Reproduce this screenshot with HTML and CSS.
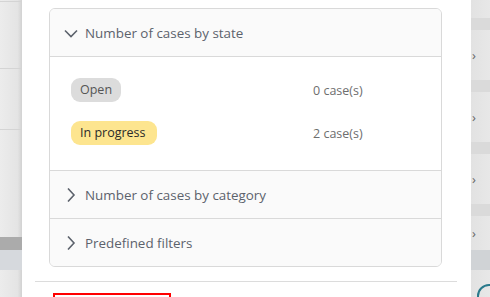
FILE: index.html
```html
<!DOCTYPE html>
<html lang="en">

<head>
  <meta charset="UTF-8" />
  <title>Cases</title>
  <link rel="stylesheet" href="styles.css">
</head>

<body>
  <!-- page behind the dialog, left edge -->
  <div class="backdrop-left">
    <div class="bl-row bl-row-top"></div>
    <div class="bl-row bl-row-a"></div>
    <div class="bl-row bl-row-b"></div>
    <div class="bl-gap"></div>
    <div class="bl-dark"></div>
    <div class="bl-blue"></div>
  </div>

  <div class="dialog">
    <div class="panel">
      <div class="section open">
        <div class="section-head">
          <svg class="chev" width="14" height="14" viewBox="0 0 14 14"><path d="M1 4.5 L7 10.5 L13 4.5" /></svg>
          <span>Number of cases by state</span>
        </div>
        <div class="section-body">
          <div class="state-row">
            <span class="pill pill-open">Open</span>
            <span class="count">0 case(s)</span>
          </div>
          <div class="state-row">
            <span class="pill pill-progress">In progress</span>
            <span class="count">2 case(s)</span>
          </div>
        </div>
      </div>
      <div class="section">
        <div class="section-head">
          <svg class="chev" width="14" height="14" viewBox="0 0 14 14"><path d="M4 0.5 L10 7 L4 13.5" /></svg>
          <span>Number of cases by category</span>
        </div>
      </div>
      <div class="section">
        <div class="section-head">
          <svg class="chev" width="14" height="14" viewBox="0 0 14 14"><path d="M4 0.5 L10 7 L4 13.5" /></svg>
          <span>Predefined filters</span>
        </div>
      </div>
    </div>

    <div class="dialog-footer">
      <div class="focus-box"></div>
    </div>
  </div>

  <!-- page behind the dialog, right edge -->
  <div class="backdrop-right">
    <div class="br-item"><span class="br-arrow">&rsaquo;</span></div>
    <div class="br-item"><span class="br-arrow">&rsaquo;</span></div>
    <div class="br-item"><span class="br-arrow">&rsaquo;</span></div>
    <div class="br-item"><span class="br-arrow">&rsaquo;</span></div>
    <div class="br-blue"></div>
    <div class="br-icon"></div>
  </div>
</body>

</html>
```

FILE: styles.css
```css
* {
  margin: 0;
  padding: 0;
  box-sizing: border-box;
}

body {
  width: 490px;
  height: 297px;
  overflow: hidden;
  display: flex;
  font-family: "Open Sans", "Noto Sans", sans-serif;
  background: #e8e8e8;
}

/* left backdrop */
.backdrop-left {
  width: 22px;
  flex-shrink: 0;
  display: flex;
  flex-direction: column;
  background: linear-gradient(to right, #ececec, #e4e4e4 80%, #d2d2d2);
}

.bl-row {
  flex-shrink: 0;
  border-bottom: 1px solid #d4d4d4;
}

.bl-row-top {
  height: 2px;
}

.bl-row-a {
  height: 67px;
}

.bl-row-b {
  height: 61px;
}

.bl-gap {
  flex-shrink: 0;
  height: 107px;
}

.bl-dark {
  flex-shrink: 0;
  height: 13px;
  background: #ababab;
}

.bl-blue {
  flex-shrink: 0;
  height: 20px;
  background: #d6d9dd;
}

/* dialog */
.dialog {
  width: 449px;
  flex-shrink: 0;
  background: #ffffff;
  padding-top: 8px;
  display: flex;
  flex-direction: column;
}

.panel {
  flex-shrink: 0;
  margin: 0 29px 0 27px;
  border: 1px solid #d9d9d9;
  border-radius: 6px;
  overflow: hidden;
}

.section + .section {
  border-top: 1px solid #d9d9d9;
}

.section-head {
  height: 47px;
  display: flex;
  align-items: center;
  gap: 7px;
  padding-left: 14px;
  background: #fafafa;
  font-size: 13.4px;
  color: #5c626c;
}

.chev {
  fill: none;
  stroke: #5c626c;
  stroke-width: 1.6;
}

.open .section-head {
  border-bottom: 1px solid #d9d9d9;
  height: 48px;
}

.section-body {
  background: #ffffff;
  padding: 21px 21px 25px;
  display: flex;
  flex-direction: column;
  gap: 19px;
}

.state-row {
  display: flex;
  align-items: center;
}

.pill {
  display: inline-block;
  font-size: 12.5px;
  line-height: 24px;
  height: 24px;
  padding: 0 9px;
  border-radius: 9px;
}

.pill-open {
  background: #dcdcdc;
  color: #555555;
  width: 50px;
}

.pill-progress {
  background: #fde58f;
  color: #2a2a2a;
  width: 86px;
}

.count {
  margin-left: auto;
  width: 107px;
  font-size: 12.5px;
  color: #6e6e6e;
}

.dialog-footer {
  flex-shrink: 0;
  margin: 14px 14px 0 13px;
  border-top: 1px solid #dcdcdc;
  padding: 11px 0 0 18px;
}

.focus-box {
  width: 118px;
  height: 20px;
  border: 2px solid #ff0000;
}

/* right backdrop */
.backdrop-right {
  flex: 1;
  display: flex;
  flex-direction: column;
  padding-top: 18px;
  background: linear-gradient(to right, #e2e2e2, #ebebeb);
}

.br-item {
  flex-shrink: 0;
  height: 62px;
  border-top: 12px solid #dadada;
  display: flex;
  align-items: center;
  font-size: 13px;
  color: #666666;
  padding-left: 1px;
}

.br-item:nth-child(4) {
  height: 46px;
}

.br-blue {
  flex-shrink: 0;
  height: 20px;
  background: #d0d3d6;
}

.br-icon {
  flex-shrink: 0;
  margin: 14px 0 0 6px;
  width: 24px;
  height: 24px;
  border: 2px solid #2a7a8c;
  border-radius: 50%;
}
```
